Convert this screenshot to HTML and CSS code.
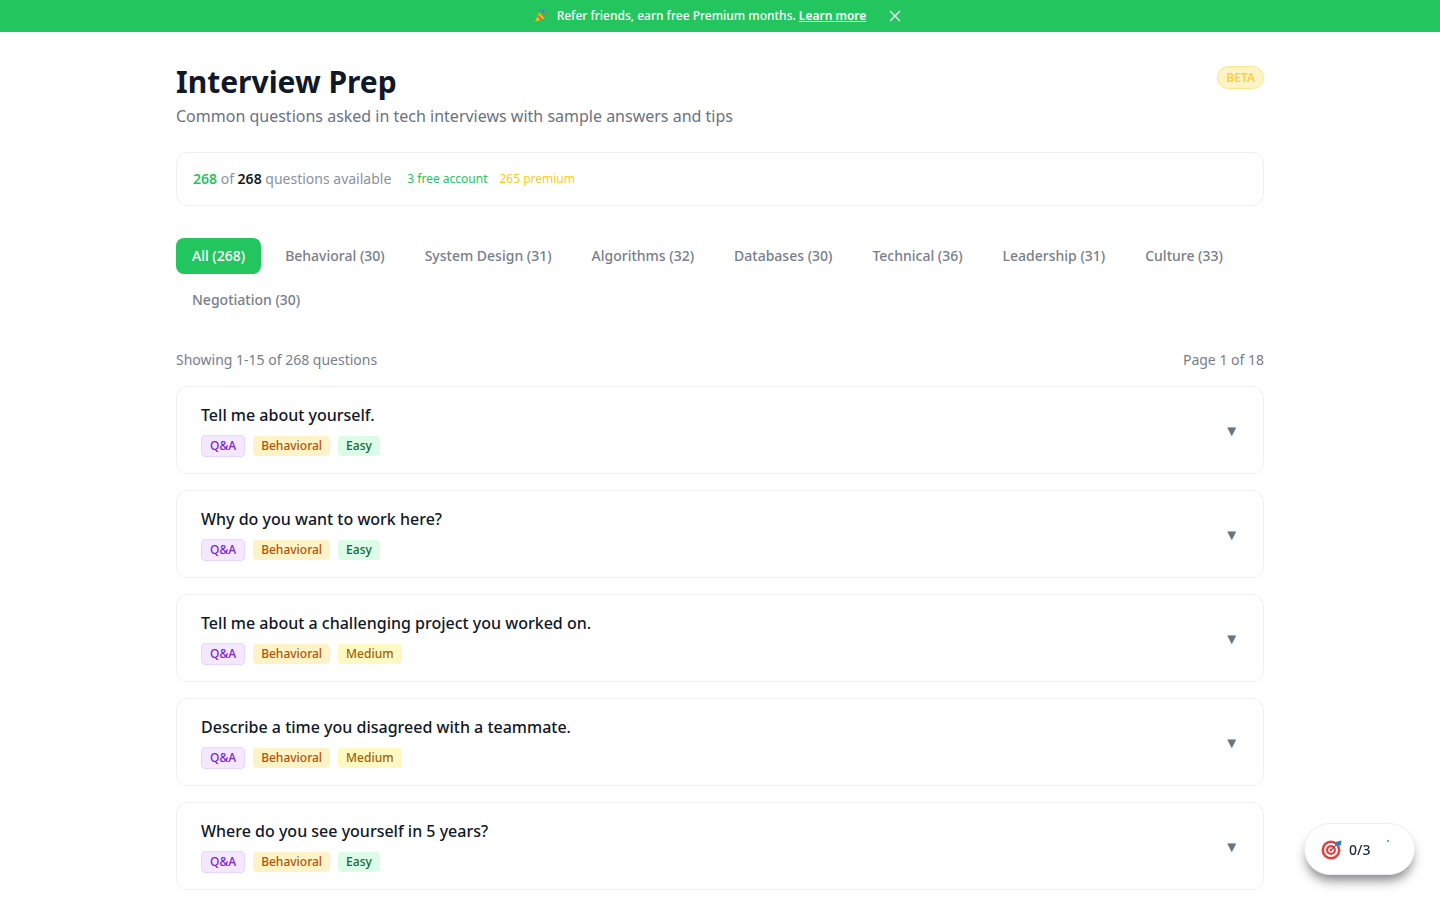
FILE: index.html
```html
<!DOCTYPE html>
<html lang="en">
<head>
  <meta charset="UTF-8" />
  <meta name="viewport" content="width=device-width, initial-scale=1.0"/>
  <title>Interview Prep</title>
  <link rel="stylesheet" href="styles.css">
</head>
<body>

  <!-- Promo banner -->
  <div class="banner">
    <svg class="popper" viewBox="0 0 14 14" width="15" height="15">
      <path d="M1 13 L4.5 4 L10 9.5 Z" fill="#f4b324"/>
      <path d="M3 8 L6.5 11.5 L8 10.8 L3.8 6 Z" fill="#e0612c"/>
      <path d="M7 1.5 L9 5 L10.5 2.5 Z" fill="#7b5fc4"/>
      <path d="M9.5 6 L13 4.5 L13 7 Z" fill="#e05a7a"/>
      <circle cx="6" cy="2" r="1" fill="#3f8fd6"/>
    </svg>
    <span class="banner-text">Refer friends, earn free Premium months. <a class="banner-link" href="#">Learn more</a></span>
    <svg class="banner-close" viewBox="0 0 12 12" width="12" height="12">
      <path d="M1 1 L11 11 M11 1 L1 11" stroke="#fff" stroke-width="1.3" fill="none"/>
    </svg>
  </div>

  <div class="container">

    <div class="header">
      <div>
        <h1>Interview Prep</h1>
        <p class="subtitle">Common questions asked in tech interviews with sample answers and tips</p>
      </div>
      <span class="beta">BETA</span>
    </div>

    <div class="stats">
      <span class="stats-main"><b class="green">268</b> of <b class="dark">268</b> questions available</span>
      <span class="stats-free">3 free account</span>
      <span class="stats-premium">265 premium</span>
    </div>

    <div class="tabs">
      <a class="tab active">All (268)</a>
      <a class="tab">Behavioral (30)</a>
      <a class="tab">System Design (31)</a>
      <a class="tab">Algorithms (32)</a>
      <a class="tab">Databases (30)</a>
      <a class="tab">Technical (36)</a>
      <a class="tab">Leadership (31)</a>
      <a class="tab">Culture (33)</a>
      <a class="tab">Negotiation (30)</a>
    </div>

    <div class="showing">
      <span>Showing 1-15 of 268 questions</span>
      <span>Page 1 of 18</span>
    </div>

    <div class="question">
      <div>
        <div class="question-title">Tell me about yourself.</div>
        <div class="tags">
          <span class="tag tag-qa">Q&amp;A</span>
          <span class="tag tag-cat">Behavioral</span>
          <span class="tag tag-easy">Easy</span>
        </div>
      </div>
      <span class="arrow">▼</span>
    </div>

    <div class="question">
      <div>
        <div class="question-title">Why do you want to work here?</div>
        <div class="tags">
          <span class="tag tag-qa">Q&amp;A</span>
          <span class="tag tag-cat">Behavioral</span>
          <span class="tag tag-easy">Easy</span>
        </div>
      </div>
      <span class="arrow">▼</span>
    </div>

    <div class="question">
      <div>
        <div class="question-title">Tell me about a challenging project you worked on.</div>
        <div class="tags">
          <span class="tag tag-qa">Q&amp;A</span>
          <span class="tag tag-cat">Behavioral</span>
          <span class="tag tag-medium">Medium</span>
        </div>
      </div>
      <span class="arrow">▼</span>
    </div>

    <div class="question">
      <div>
        <div class="question-title">Describe a time you disagreed with a teammate.</div>
        <div class="tags">
          <span class="tag tag-qa">Q&amp;A</span>
          <span class="tag tag-cat">Behavioral</span>
          <span class="tag tag-medium">Medium</span>
        </div>
      </div>
      <span class="arrow">▼</span>
    </div>

    <div class="question">
      <div>
        <div class="question-title">Where do you see yourself in 5 years?</div>
        <div class="tags">
          <span class="tag tag-qa">Q&amp;A</span>
          <span class="tag tag-cat">Behavioral</span>
          <span class="tag tag-easy">Easy</span>
        </div>
      </div>
      <span class="arrow">▼</span>
    </div>

  </div>

  <!-- Floating goal widget -->
  <div class="goal">
    <svg class="goal-icon" viewBox="0 0 20 20" width="21" height="21">
      <circle cx="9.5" cy="10.5" r="9" fill="#e5403f"/>
      <circle cx="9.5" cy="10.5" r="6.6" fill="#fff"/>
      <circle cx="9.5" cy="10.5" r="4.8" fill="#e5403f"/>
      <circle cx="9.5" cy="10.5" r="2.6" fill="#fff"/>
      <circle cx="9.5" cy="10.5" r="1.2" fill="#e5403f"/>
      <path d="M9.5 10.5 L15 5" stroke="#555" stroke-width="1"/>
      <path d="M14.5 2.5 L19.5 1.5 L19 6 L16 6.5 L14 5 Z" fill="#2f7fc1"/>
    </svg>
    <span>0/3</span>
    <span class="goal-dot"></span>
  </div>

</body>
</html>
```

FILE: styles.css
```css
body {
  margin: 0;
  background: #fff;
  font-family: "Noto Sans", sans-serif;
  color: #111827;
}

.banner {
  height: 32px;
  box-sizing: border-box;
  padding-bottom: 1px;
  background: #22c55e;
  color: #fff;
  font-size: 12px;
  font-weight: 500;
  display: flex;
  justify-content: center;
  align-items: center;
}

.popper {
  margin-right: 8px;
}

.banner-link {
  color: #fff;
  font-weight: 600;
  text-decoration: underline;
}

.banner-close {
  margin-left: 23px;
  margin-right: 5px;
}

.container {
  width: 1088px;
  margin: 0 auto;
  padding: 32px 0 10px;
}

.header {
  display: flex;
  justify-content: space-between;
  align-items: flex-start;
  margin-bottom: 24px;
}

h1 {
  margin: 0 0 4px;
  font-size: 30px;
  line-height: 36px;
  font-weight: 700;
  color: #111827;
}

.subtitle {
  margin: 0;
  font-size: 16px;
  line-height: 24px;
  color: #6b7280;
}

.beta {
  margin-top: 2px;
  padding: 0 8px;
  height: 21px;
  line-height: 21px;
  font-size: 12px;
  font-weight: 600;
  color: #fbd038;
  background: #fef3c7;
  border: 1px solid #fde68a;
  border-radius: 12px;
}

.stats {
  height: 54px;
  box-sizing: border-box;
  padding: 0 16px 2px;
  border: 1px solid #eef0f2;
  border-radius: 12px;
  display: flex;
  align-items: center;
  gap: 12px;
  font-size: 12px;
  margin-bottom: 32px;
}

.stats-main {
  font-size: 14px;
  color: #8b919c;
  margin-right: 4px;
}

.green {
  color: #22c55e;
  font-weight: 600;
}

.dark {
  color: #111827;
  font-weight: 600;
}

.stats-free {
  color: #22c55e;
}

.stats-premium {
  color: #facc15;
}

.tabs {
  display: flex;
  flex-wrap: wrap;
  gap: 8px;
  margin-bottom: 32px;
}

.tab {
  height: 36px;
  line-height: 36px;
  padding: 0 16px;
  font-size: 14px;
  font-weight: 500;
  color: #787e8a;
  border-radius: 8px;
}

.tab.active {
  background: #22c55e;
  color: #fff;
}

.showing {
  display: flex;
  justify-content: space-between;
  font-size: 14px;
  line-height: 20px;
  color: #787e8a;
  margin-bottom: 16px;
}

.question {
  height: 88px;
  box-sizing: border-box;
  padding: 0 24px;
  margin-bottom: 16px;
  border: 1px solid #eef0f2;
  border-radius: 12px;
  display: flex;
  justify-content: space-between;
  align-items: center;
}

.question:last-child {
  margin-bottom: 0;
}

.question-title {
  font-size: 16px;
  line-height: 24px;
  font-weight: 500;
  color: #111827;
  margin-bottom: 8px;
}

.tags {
  display: flex;
  gap: 8px;
  align-items: center;
}

.tag {
  height: 20px;
  line-height: 20px;
  padding: 0 8px;
  font-size: 12px;
  font-weight: 500;
  border-radius: 4px;
}

.tag-qa {
  color: #7e22ce;
  background: #f3e8ff;
  border: 1px solid #e9d5ff;
}

.tag-cat {
  color: #b45309;
  background: #fef3c7;
}

.tag-easy {
  color: #166534;
  background: #dcfce7;
}

.tag-medium {
  color: #a16207;
  background: #fef9c3;
}

.arrow {
  font-size: 15px;
  color: #6b7280;
}

.goal {
  position: fixed;
  right: 25px;
  bottom: 25px;
  width: 111px;
  height: 52px;
  box-sizing: border-box;
  padding-left: 16px;
  background: #fff;
  border: 1px solid #eceef1;
  border-radius: 26px;
  box-shadow: 0 8px 12px -3px rgba(0, 0, 0, 0.5);
  display: flex;
  align-items: center;
  gap: 7px;
  font-size: 14px;
  font-weight: 500;
  color: #1f2937;
}

.goal-dot {
  position: absolute;
  top: 16px;
  right: 25px;
  width: 2px;
  height: 2px;
  background: #2f8f9f;
  border-radius: 50%;
}
```
